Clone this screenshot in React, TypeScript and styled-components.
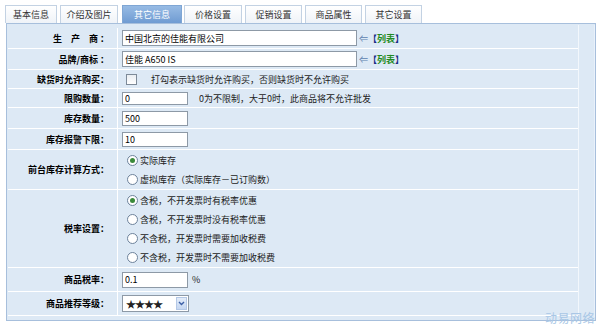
import React from 'react';
import styled, { createGlobalStyle } from 'styled-components';

const GlobalStyle = createGlobalStyle`
  html, body {
    margin: 0;
    padding: 0;
    background: #fff;
  }
  body {
    font-family: "Noto Sans CJK SC", "Liberation Sans", sans-serif;
    font-size: 9px;
    color: #000;
  }
`;

const Page = styled.div`
  position: relative;
  width: 599px;
  height: 325px;
  padding: 5px 3px 0 5px;
  box-sizing: border-box;
  overflow: hidden;
`;

const TabBar = styled.div`
  display: flex;
  align-items: flex-end;
  height: 18px;
`;

const Tab = styled.div<{ $w: number; $gap: number; $active?: boolean }>`
  width: ${(p) => p.$w}px;
  margin-right: ${(p) => p.$gap}px;
  height: 18px;
  box-sizing: border-box;
  border: 1px solid ${(p) => (p.$active ? '#7fa6d4' : '#c3d2e3')};
  border-bottom: none;
  background: ${(p) =>
    p.$active
      ? 'linear-gradient(#97bbe4, #6f9bd2)'
      : 'linear-gradient(#ffffff, #eff3f8)'};
  color: ${(p) => (p.$active ? '#fff' : '#333')};
  display: flex;
  align-items: center;
  justify-content: center;
  line-height: 1;
  white-space: nowrap;
`;

const Panel = styled.div`
  margin-left: 1px;
  width: 590px;
  height: 298px;
  box-sizing: border-box;
  border: 1px solid #a7bfdc;
  background: #dde9f5;
  padding: 4px 0 3px 1px;
  display: flex;
`;

const Form = styled.div`
  width: 570px;
  display: flex;
  flex-direction: column;
`;

const Strip = styled.div`
  flex: 1;
  border-left: 1px solid #f2f7fc;
  border-right: 1px solid #e9f1fa;
  margin-top: -3px;
`;

const Row = styled.div<{ $h: number }>`
  display: grid;
  grid-template-columns: 110px 1fr;
  height: ${(p) => p.$h}px;
  border-bottom: 1px solid #fff;
  box-sizing: border-box;
`;

const Label = styled.div`
  font-weight: bold;
  display: flex;
  align-items: center;
  justify-content: flex-end;
  padding-right: 8px;
  border-right: 1px solid #fff;
  white-space: pre;
`;

const Value = styled.div<{ $stack?: boolean }>`
  display: flex;
  flex-direction: ${(p) => (p.$stack ? 'column' : 'row')};
  align-items: ${(p) => (p.$stack ? 'flex-start' : 'center')};
  justify-content: ${(p) => (p.$stack ? 'center' : 'flex-start')};
  gap: ${(p) => (p.$stack ? '8px' : '0')};
  padding-left: 4px;
  color: #222;
`;

const TextInput = styled.input<{ $w: number; $h: number }>`
  width: ${(p) => p.$w}px;
  height: ${(p) => p.$h}px;
  box-sizing: border-box;
  border: 1px solid #8d99a6;
  background: #fff;
  padding: 0 2px;
  margin: 0;
  font-family: inherit;
  font-size: 9px;
  color: #000;
  outline: none;
`;

const Arrow = styled.span`
  color: #5b7fae;
  margin-left: 2px;
`;

const ListLink = styled.span`
  font-weight: bold;
  color: #1a2c86;

  b {
    color: #1f8a22;
    font-weight: bold;
  }
`;

const Hint = styled.span<{ $ml: number }>`
  margin-left: ${(p) => p.$ml}px;
  color: #222;
`;

const Box = styled.span`
  width: 11px;
  height: 11px;
  box-sizing: border-box;
  border: 1px solid #7d8a98;
  background: linear-gradient(#e9edf1, #fff);
  margin-left: 4px;
`;

const RadioItem = styled.div`
  display: flex;
  align-items: center;
  gap: 2px;
  height: 11px;
  padding-left: 5px;
  white-space: nowrap;
`;

const RadioDot = styled.span<{ $on?: boolean }>`
  width: 11px;
  height: 11px;
  box-sizing: border-box;
  border-radius: 50%;
  border: 1px solid #6d829b;
  background: #fff;
  display: flex;
  align-items: center;
  justify-content: center;

  &::after {
    content: '';
    width: 5px;
    height: 5px;
    border-radius: 50%;
    background: ${(p) => (p.$on ? '#3a8a3a' : 'transparent')};
  }
`;

const SelectBox = styled.div`
  width: 67px;
  height: 17px;
  box-sizing: border-box;
  border: 1px solid #8d99a6;
  background: #fff;
  display: flex;
  align-items: center;
  justify-content: space-between;
  padding: 1px 1px 1px 3px;
  font-size: 10px;
  letter-spacing: -1px;
`;

const SelectButton = styled.span`
  width: 11px;
  height: 13px;
  box-sizing: border-box;
  border: 1px solid #b4c8e6;
  background: linear-gradient(#e3ecf9, #c6d7f1);
  display: flex;
  align-items: center;
  justify-content: center;
`;

const Watermark = styled.div`
  position: absolute;
  right: 4px;
  bottom: 0;
  font-size: 12px;
  line-height: 14px;
  color: #a9c7e6;
  letter-spacing: 0.5px;
`;

const tabs = [
  { t: '基本信息', w: 52, g: 3 },
  { t: '介绍及图片', w: 58, g: 4 },
  { t: '其它信息', w: 60, g: 2, active: true },
  { t: '价格设置', w: 58, g: 3 },
  { t: '促销设置', w: 57, g: 3 },
  { t: '商品属性', w: 57, g: 3 },
  { t: '其它设置', w: 57, g: 0 },
];

const App: React.FC = () => {
  return (
    <Page>
      <GlobalStyle />
      <TabBar>
        {tabs.map((tab) => (
          <Tab key={tab.t} $w={tab.w} $gap={tab.g} $active={tab.active}>
            {tab.t}
          </Tab>
        ))}
      </TabBar>
      <Panel>
        <Form>
          <Row $h={21}>
            <Label>{'生　产　商 ：'}</Label>
            <Value>
              <TextInput $w={235} $h={16} readOnly defaultValue="中国北京的佳能有限公司" />
              <Arrow>⇐</Arrow>
              <ListLink>
                【<b>列表</b>】
              </ListLink>
            </Value>
          </Row>
          <Row $h={21}>
            <Label>{'品牌/商标 ：'}</Label>
            <Value>
              <TextInput $w={235} $h={16} readOnly defaultValue="佳能 A650 IS" />
              <Arrow>⇐</Arrow>
              <ListLink>
                【<b>列表</b>】
              </ListLink>
            </Value>
          </Row>
          <Row $h={19}>
            <Label>缺货时允许购买：</Label>
            <Value>
              <Box />
              <Hint $ml={14}>打勾表示缺货时允许购买，否则缺货时不允许购买</Hint>
            </Value>
          </Row>
          <Row $h={19}>
            <Label>限购数量：</Label>
            <Value>
              <TextInput $w={66} $h={13} readOnly defaultValue="0" />
              <Hint $ml={11}>0为不限制，大于0时，此商品将不允许批发</Hint>
            </Value>
          </Row>
          <Row $h={21}>
            <Label>库存数量：</Label>
            <Value>
              <TextInput $w={66} $h={15} readOnly defaultValue="500" />
            </Value>
          </Row>
          <Row $h={21}>
            <Label>库存报警下限：</Label>
            <Value>
              <TextInput $w={66} $h={15} readOnly defaultValue="10" />
            </Value>
          </Row>
          <Row $h={40}>
            <Label>前台库存计算方式：</Label>
            <Value $stack>
              <RadioItem>
                <RadioDot $on />
                实际库存
              </RadioItem>
              <RadioItem>
                <RadioDot />
                虚拟库存（实际库存－已订购数）
              </RadioItem>
            </Value>
          </Row>
          <Row $h={78}>
            <Label>税率设置：</Label>
            <Value $stack>
              <RadioItem>
                <RadioDot $on />
                含税，不开发票时有税率优惠
              </RadioItem>
              <RadioItem>
                <RadioDot />
                含税，不开发票时没有税率优惠
              </RadioItem>
              <RadioItem>
                <RadioDot />
                不含税，开发票时需要加收税费
              </RadioItem>
              <RadioItem>
                <RadioDot />
                不含税，开发票时不需要加收税费
              </RadioItem>
            </Value>
          </Row>
          <Row $h={24}>
            <Label>商品税率：</Label>
            <Value>
              <TextInput $w={66} $h={16} readOnly defaultValue="0.1" />
              <Hint $ml={4}>%</Hint>
            </Value>
          </Row>
          <Row $h={24}>
            <Label>商品推荐等级：</Label>
            <Value>
              <SelectBox>
                <span>★★★★</span>
                <SelectButton>
                  <svg width="7" height="5" viewBox="0 0 7 5">
                    <path d="M1 1 L3.5 3.5 L6 1" fill="none" stroke="#3c5fa6" strokeWidth="1.4" />
                  </svg>
                </SelectButton>
              </SelectBox>
            </Value>
          </Row>
        </Form>
        <Strip />
      </Panel>
      <Watermark>动易网络</Watermark>
    </Page>
  );
};

export default App;
